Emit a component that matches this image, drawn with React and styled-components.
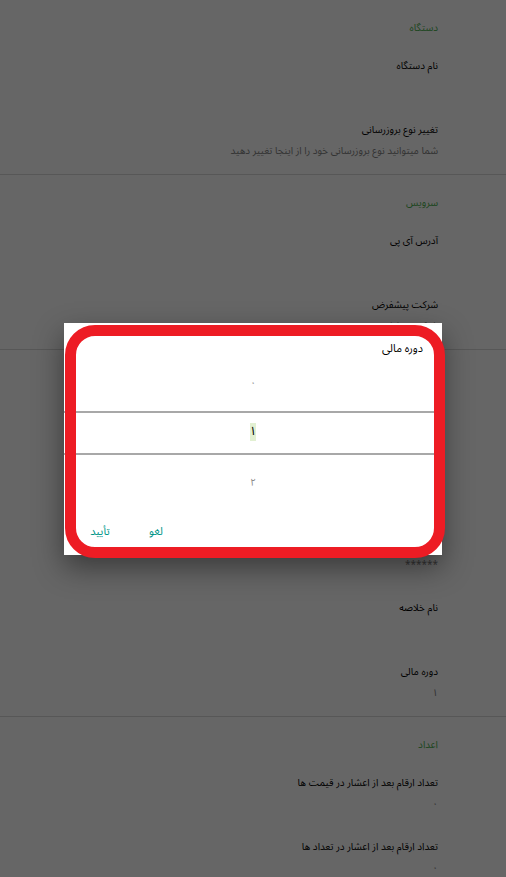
import React from "react";
import styled, { createGlobalStyle } from "styled-components";

const GlobalStyle = createGlobalStyle`
  html, body {
    margin: 0;
    padding: 0;
    background: #fff;
  }
  body {
    font-family: "Noto Sans Arabic", "Noto Naskh Arabic", "DejaVu Sans", "Noto Sans", sans-serif;
    overflow: hidden;
  }
`;

const Screen = styled.div`
  position: relative;
  width: 506px;
  height: 877px;
  overflow: hidden;
  background: #fff;
  direction: rtl;
`;

const List = styled.div`
  display: flex;
  flex-direction: column;
`;

const Category = styled.section`
  display: flex;
  flex-direction: column;
  border-bottom: ${(p) => (p.last ? "none" : "1px solid #d9d9d9")};
`;

const CategoryTitle = styled.div`
  height: 46px;
  box-sizing: border-box;
  padding: 19px 68px 0 16px;
  font-size: 10px;
  line-height: 18px;
  color: #4caf50;
`;

const Item = styled.div`
  height: 64px;
  box-sizing: border-box;
  padding: 9px 68px 0 16px;
  display: flex;
  flex-direction: column;
`;

const ItemTitle = styled.div`
  font-size: 10px;
  line-height: 22px;
  height: 22px;
  color: #000;
`;

const ItemSummary = styled.div`
  font-size: 10px;
  line-height: 20px;
  height: 20px;
  color: #808080;
`;

const Scrim = styled.div`
  position: absolute;
  inset: 0;
  background: rgba(0, 0, 0, 0.6);
  display: flex;
  align-items: center;
  justify-content: center;
`;

const DialogWrap = styled.div`
  position: relative;
  width: 378px;
  height: 232px;
  margin-top: 1px;
`;

const Dialog = styled.div`
  width: 100%;
  height: 100%;
  background: #fff;
  box-shadow: 0 12px 28px rgba(0, 0, 0, 0.45);
  display: flex;
  flex-direction: column;
`;

const DialogTitle = styled.div`
  height: 34px;
  box-sizing: border-box;
  padding: 16px 19px 0 22px;
  font-size: 11px;
  line-height: 20px;
  color: #000;
`;

const Picker = styled.div`
  position: relative;
  height: 150px;
  display: flex;
  flex-direction: column;
`;

const PickerRow = styled.div`
  height: 50px;
  display: flex;
  align-items: center;
  justify-content: center;
  font-size: ${(p) => (p.selected ? "12px" : "10px")};
  color: ${(p) => (p.selected ? "#000" : "#8a8a8a")};
`;

const Cursor = styled.span`
  display: inline-block;
  padding: 0;
  line-height: 18px;
  background: rgba(139, 195, 74, 0.25);
`;

const SelectLine = styled.div`
  position: absolute;
  left: 0;
  right: 0;
  top: ${(p) => p.top}px;
  height: 2px;
  background: #a8a8a8;
`;

const ButtonBar = styled.div`
  height: 48px;
  display: flex;
  justify-content: flex-end;
  align-items: center;
  padding-left: 8px;
`;

const TextButton = styled.button`
  min-width: 56px;
  height: 36px;
  padding: 0 8px;
  border: none;
  background: transparent;
  font-family: inherit;
  font-size: 11px;
  color: #009688;
`;

const Annotation = styled.div`
  position: absolute;
  left: 1px;
  top: 2px;
  width: 380px;
  height: 233px;
  box-sizing: border-box;
  border: 11px solid #ed1c24;
  border-radius: 30px;
  pointer-events: none;
`;

const sections = [
  {
    title: "دستگاه",
    items: [
      { title: "نام دستگاه", summary: "" },
      {
        title: "تغییر نوع بروزرسانی",
        summary: "شما میتوانید نوع بروزرسانی خود را از اینجا تغییر دهید",
      },
    ],
  },
  {
    title: "سرویس",
    items: [
      { title: "آدرس آی پی", summary: "" },
      { title: "شرکت پیشفرض", summary: "شرکت پیشفرض" },
    ],
  },
  {
    title: "حساب کاربری",
    items: [
      { title: "نام کاربری", summary: "" },
      { title: "کد کاربری", summary: "" },
      { title: "رمز عبور", summary: "******" },
      { title: "نام خلاصه", summary: "" },
      { title: "دوره مالی", summary: "۱" },
    ],
  },
  {
    title: "اعداد",
    items: [
      { title: "تعداد ارقام بعد از اعشار در قیمت ها", summary: "۰" },
      { title: "تعداد ارقام بعد از اعشار در تعداد ها", summary: "۰" },
    ],
  },
];

export default function App() {
  return (
    <Screen>
      <GlobalStyle />
      <List>
        {sections.map((s, i) => (
          <Category key={s.title} last={i === sections.length - 1}>
            <CategoryTitle>{s.title}</CategoryTitle>
            {s.items.map((it) => (
              <Item key={it.title}>
                <ItemTitle>{it.title}</ItemTitle>
                <ItemSummary>{it.summary}</ItemSummary>
              </Item>
            ))}
          </Category>
        ))}
      </List>

      <Scrim>
        <DialogWrap>
          <Dialog>
            <DialogTitle>دوره مالی</DialogTitle>
            <Picker>
              <PickerRow>۰</PickerRow>
              <PickerRow selected>
                <Cursor>۱</Cursor>
              </PickerRow>
              <PickerRow>۲</PickerRow>
              <SelectLine top={54} />
              <SelectLine top={96} />
            </Picker>
            <ButtonBar>
              <TextButton>لغو</TextButton>
              <TextButton>تأیید</TextButton>
            </ButtonBar>
          </Dialog>
          <Annotation />
        </DialogWrap>
      </Scrim>
    </Screen>
  );
}
